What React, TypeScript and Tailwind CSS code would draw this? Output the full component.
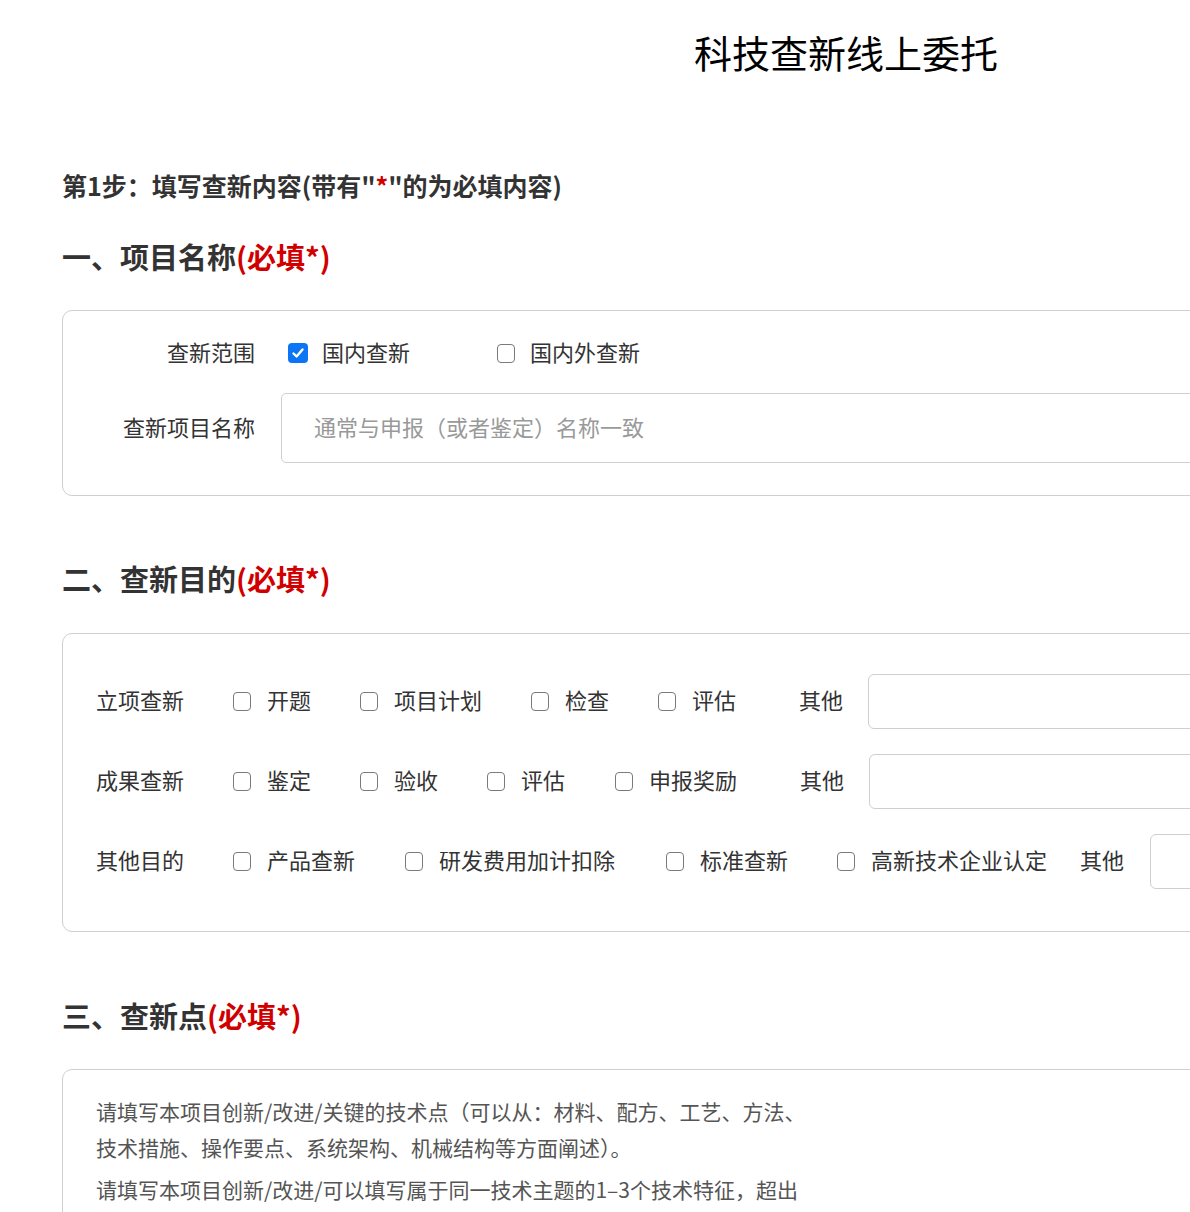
import React from "react";

const FONT = { fontFamily: '"Noto Sans CJK SC", "Noto Sans", sans-serif' };

function Box({ checked = false }: { checked?: boolean }) {
  if (checked) {
    return (
      <span className="inline-flex h-[20px] w-[20px] shrink-0 items-center justify-center rounded-[4px] bg-[#0b75f5]">
        <svg width="14" height="14" viewBox="0 0 14 14" fill="none">
          <path d="M2.5 7.5 L5.6 10.5 L11.5 3.5" stroke="white" strokeWidth="2.4" strokeLinecap="round" strokeLinejoin="round" />
        </svg>
      </span>
    );
  }
  return <span className="inline-block h-[19px] w-[18px] shrink-0 rounded-[4px] border border-[#7a7a7a] bg-white" />;
}

function T({ children, className = "" }: { children: React.ReactNode; className?: string }) {
  return <span className={"-mt-[4px] whitespace-nowrap " + className}>{children}</span>;
}

function Item({ text, className = "" }: { text: string; className?: string }) {
  return (
    <span className={"flex items-center " + className}>
      <Box />
      <T className="ml-[16px]">{text}</T>
    </span>
  );
}

function Heading({ children, className = "" }: { children: React.ReactNode; className?: string }) {
  return (
    <div className={"text-[29px] font-bold leading-[40px] text-[#333] " + className}>
      {children}
      <span className="text-[#d10000]">(必填*)</span>
    </div>
  );
}

export default function App() {
  return (
    <div className="h-[1212px] w-[1190px] overflow-hidden bg-white" style={FONT}>
      <div className="w-[1692px] px-[62px]">
        <div className="pt-[22px] text-center text-[38px] leading-[60px] text-black">科技查新线上委托</div>

        <div className="mt-[83px] text-[25px] font-bold leading-[40px] text-[#333]">
          第1步：填写查新内容(带有"<span className="text-[#d10000]">*</span>"的为必填内容)
        </div>

        <Heading className="mt-[31px]">一、项目名称</Heading>

        <div className="mt-[34px] rounded-[10px] border border-[#cfcfcf] pb-[32px] pt-[22px] text-[22px] text-[#333]">
          <div className="flex h-[40px] items-center">
            <T className="w-[192px] text-right">查新范围</T>
            <div className="ml-[33px] flex items-center">
              <Box checked />
              <T className="ml-[14px]">国内查新</T>
            </div>
            <div className="ml-[87px] flex items-center">
              <Box />
              <T className="ml-[15px]">国内外查新</T>
            </div>
          </div>
          <div className="mt-[20px] flex items-center">
            <T className="w-[192px] text-right">查新项目名称</T>
            <div className="ml-[26px] flex h-[70px] flex-1 items-center rounded-[5px] border border-[#cfcfcf] pb-[4px] pl-[32px] text-[#999]">
              通常与申报（或者鉴定）名称一致
            </div>
            <div className="w-[32px]" />
          </div>
        </div>

        <Heading className="mt-[62px]">二、查新目的</Heading>

        <div className="mt-[35px] flex flex-col gap-[25px] rounded-[10px] border border-[#cfcfcf] pb-[42px] pl-[33px] pr-[32px] pt-[40px] text-[22px] text-[#333]">
          <div className="flex h-[55px] items-center">
            <T className="w-[88px]">立项查新</T>
            <Item text="开题" className="ml-[49px]" />
            <Item text="项目计划" className="ml-[49px]" />
            <Item text="检查" className="ml-[49px]" />
            <Item text="评估" className="ml-[49px]" />
            <T className="ml-[63px]">其他</T>
            <div className="ml-[25px] h-[55px] flex-1 rounded-[6px] border border-[#cfcfcf]" />
          </div>
          <div className="flex h-[55px] items-center">
            <T className="w-[88px]">成果查新</T>
            <Item text="鉴定" className="ml-[49px]" />
            <Item text="验收" className="ml-[49px]" />
            <Item text="评估" className="ml-[49px]" />
            <Item text="申报奖励" className="ml-[50px]" />
            <T className="ml-[63px]">其他</T>
            <div className="ml-[25px] h-[55px] flex-1 rounded-[6px] border border-[#cfcfcf]" />
          </div>
          <div className="flex h-[55px] items-center">
            <T className="w-[88px]">其他目的</T>
            <Item text="产品查新" className="ml-[49px]" />
            <Item text="研发费用加计扣除" className="ml-[50px]" />
            <Item text="标准查新" className="ml-[51px]" />
            <Item text="高新技术企业认定" className="ml-[49px]" />
            <T className="ml-[33px]">其他</T>
            <div className="ml-[26px] h-[55px] flex-1 rounded-[6px] border border-[#cfcfcf]" />
          </div>
        </div>

        <Heading className="mt-[63px]">三、查新点</Heading>

        <div className="mt-[34px] h-[400px] rounded-[10px] border border-[#cfcfcf] pl-[33px] pt-[23px] text-[21px] leading-[36px] text-[#555]">
          <p>
            <span className="block">请填写本项目创新/改进/关键的技术点（可以从：材料、配方、工艺、方法、</span>
            <span className="block">技术措施、操作要点、系统架构、机械结构等方面阐述）。</span>
          </p>
          <p className="mt-[6px]">
            <span className="block">请填写本项目创新/改进/可以填写属于同一技术主题的1–3个技术特征，超出</span>
          </p>
        </div>
      </div>
    </div>
  );
}
